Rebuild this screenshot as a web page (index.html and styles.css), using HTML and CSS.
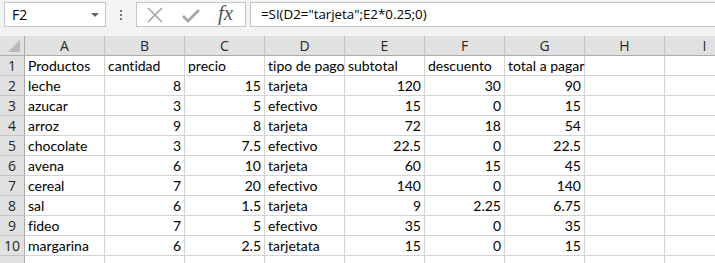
FILE: index.html
```html
<!DOCTYPE html>
<html lang="es">
<head>
    <meta charset="UTF-8">
    <title>Libro1 - Excel</title>
    <link rel="stylesheet" href="styles.css">
</head>
<body>
    <div class="formula-bar">
        <div class="name-box">
            <span>F2</span>
            <span class="caret"></span>
        </div>
        <div class="grip"><i></i><i></i><i></i></div>
        <div class="buttons">
            <svg class="icon" width="18" height="18" viewBox="0 0 18 18">
                <path d="M2 2 L16 16 M16 2 L2 16" stroke="#a6a6a6" stroke-width="1.6" fill="none"/>
            </svg>
            <svg class="icon" width="20" height="18" viewBox="0 0 20 18">
                <path d="M2 10 L7 15 L18 4" stroke="#a6a6a6" stroke-width="2.8" fill="none"/>
            </svg>
            <span class="fx">fx</span>
        </div>
        <div class="formula">=SI(D2="tarjeta";E2*0.25;0)</div>
    </div>

    <div class="sheet">
        <div class="corner"><span class="tri"></span></div>
        <div class="col-head">A</div>
        <div class="col-head">B</div>
        <div class="col-head">C</div>
        <div class="col-head">D</div>
        <div class="col-head">E</div>
        <div class="col-head">F</div>
        <div class="col-head">G</div>
        <div class="col-head">H</div>
        <div class="col-head">I</div>

        <div class="row-head">1</div>
        <div class="cell">Productos</div><div class="cell">cantidad</div><div class="cell">precio</div><div class="cell">tipo de pago</div><div class="cell">subtotal</div><div class="cell">descuento</div><div class="cell">total a pagar</div><div class="cell"></div><div class="cell"></div>

        <div class="row-head">2</div>
        <div class="cell">leche</div><div class="cell num">8</div><div class="cell num">15</div><div class="cell">tarjeta</div><div class="cell num">120</div><div class="cell num">30</div><div class="cell num">90</div><div class="cell"></div><div class="cell"></div>

        <div class="row-head">3</div>
        <div class="cell">azucar</div><div class="cell num">3</div><div class="cell num">5</div><div class="cell">efectivo</div><div class="cell num">15</div><div class="cell num">0</div><div class="cell num">15</div><div class="cell"></div><div class="cell"></div>

        <div class="row-head">4</div>
        <div class="cell">arroz</div><div class="cell num">9</div><div class="cell num">8</div><div class="cell">tarjeta</div><div class="cell num">72</div><div class="cell num">18</div><div class="cell num">54</div><div class="cell"></div><div class="cell"></div>

        <div class="row-head">5</div>
        <div class="cell">chocolate</div><div class="cell num">3</div><div class="cell num">7.5</div><div class="cell">efectivo</div><div class="cell num">22.5</div><div class="cell num">0</div><div class="cell num">22.5</div><div class="cell"></div><div class="cell"></div>

        <div class="row-head">6</div>
        <div class="cell">avena</div><div class="cell num">6</div><div class="cell num">10</div><div class="cell">tarjeta</div><div class="cell num">60</div><div class="cell num">15</div><div class="cell num">45</div><div class="cell"></div><div class="cell"></div>

        <div class="row-head">7</div>
        <div class="cell">cereal</div><div class="cell num">7</div><div class="cell num">20</div><div class="cell">efectivo</div><div class="cell num">140</div><div class="cell num">0</div><div class="cell num">140</div><div class="cell"></div><div class="cell"></div>

        <div class="row-head">8</div>
        <div class="cell">sal</div><div class="cell num">6</div><div class="cell num">1.5</div><div class="cell">tarjeta</div><div class="cell num">9</div><div class="cell num">2.25</div><div class="cell num">6.75</div><div class="cell"></div><div class="cell"></div>

        <div class="row-head">9</div>
        <div class="cell">fideo</div><div class="cell num">7</div><div class="cell num">5</div><div class="cell">efectivo</div><div class="cell num">35</div><div class="cell num">0</div><div class="cell num">35</div><div class="cell"></div><div class="cell"></div>

        <div class="row-head">10</div>
        <div class="cell">margarina</div><div class="cell num">6</div><div class="cell num">2.5</div><div class="cell">tarjetata</div><div class="cell num">15</div><div class="cell num">0</div><div class="cell num">15</div><div class="cell"></div><div class="cell"></div>

        <div class="row-head"></div>
        <div class="cell"></div><div class="cell"></div><div class="cell"></div><div class="cell"></div><div class="cell"></div><div class="cell"></div><div class="cell"></div><div class="cell"></div><div class="cell"></div>
    </div>
</body>
</html>
```

FILE: styles.css
```css
* {
    margin: 0;
    padding: 0;
    box-sizing: border-box;
}

body {
    width: 715px;
    height: 263px;
    overflow: hidden;
    background: #fff;
    font-family: 'Open Sans', 'Noto Sans', sans-serif;
    color: #000;
}

/* formula bar */
.formula-bar {
    display: flex;
    align-items: flex-start;
    height: 36px;
    padding-top: 2px;
    background: #f3f3f3;
    white-space: nowrap;
}

.name-box {
    display: flex;
    align-items: center;
    justify-content: space-between;
    width: 102px;
    height: 25px;
    margin-left: 4px;
    padding: 0 6px 0 7px;
    background: #fff;
    border: 1px solid #c6c6c6;
    font-size: 14px;
}

.caret {
    width: 0;
    height: 0;
    border-left: 4px solid transparent;
    border-right: 4px solid transparent;
    border-top: 4px solid #666;
}

.grip {
    display: flex;
    flex-direction: column;
    gap: 2px;
    width: 30px;
    padding-top: 8px;
    align-items: center;
}

.grip i {
    display: block;
    width: 2px;
    height: 2px;
    background: #777;
}

.buttons {
    display: flex;
    align-items: center;
    gap: 17px;
    width: 110px;
    height: 25px;
    padding-left: 9px;
    background: #fff;
    border: 1px solid #c6c6c6;
}

.fx {
    font-family: 'Liberation Serif', serif;
    font-style: italic;
    font-size: 21px;
    line-height: 1;
    color: #555;
    margin-top: -2px;
}

.formula {
    flex: 1;
    height: 25px;
    margin-left: 4px;
    margin-right: -20px;
    padding-left: 10px;
    line-height: 23px;
    font-size: 13.3px;
    background: #fff;
    border: 1px solid #c6c6c6;
}

/* grid */
.sheet {
    display: grid;
    grid-template-columns: 25px repeat(9, 80px);
    grid-template-rows: 20px;
    grid-auto-rows: 20px;
}

.corner,
.col-head,
.row-head {
    background: #e1e1e1;
    font-family: 'Open Sans', 'Noto Sans', sans-serif;
    font-size: 14px;
    color: #262626;
}

.corner {
    position: relative;
    border-right: 1px solid #ababab;
    border-bottom: 1px solid #ababab;
}

.tri {
    position: absolute;
    right: 4px;
    bottom: 3px;
    width: 0;
    height: 0;
    border-left: 12px solid transparent;
    border-bottom: 12px solid #b8b8b8;
}

.col-head {
    text-align: center;
    line-height: 19px;
    border-right: 1px solid #c4c4c4;
    border-bottom: 1px solid #ababab;
}

.row-head {
    text-align: center;
    line-height: 19px;
    border-right: 1px solid #ababab;
    border-bottom: 1px solid #c4c4c4;
}

.cell {
    padding: 0 3px 0 3px;
    font-family: 'Lato', 'Open Sans', sans-serif;
    font-size: 14px;
    font-variant-ligatures: none;
    line-height: 20px;
    border-right: 1px solid #d4d4d4;
    border-bottom: 1px solid #d4d4d4;
    white-space: nowrap;
    overflow: visible;
}

.num {
    text-align: right;
}
```
